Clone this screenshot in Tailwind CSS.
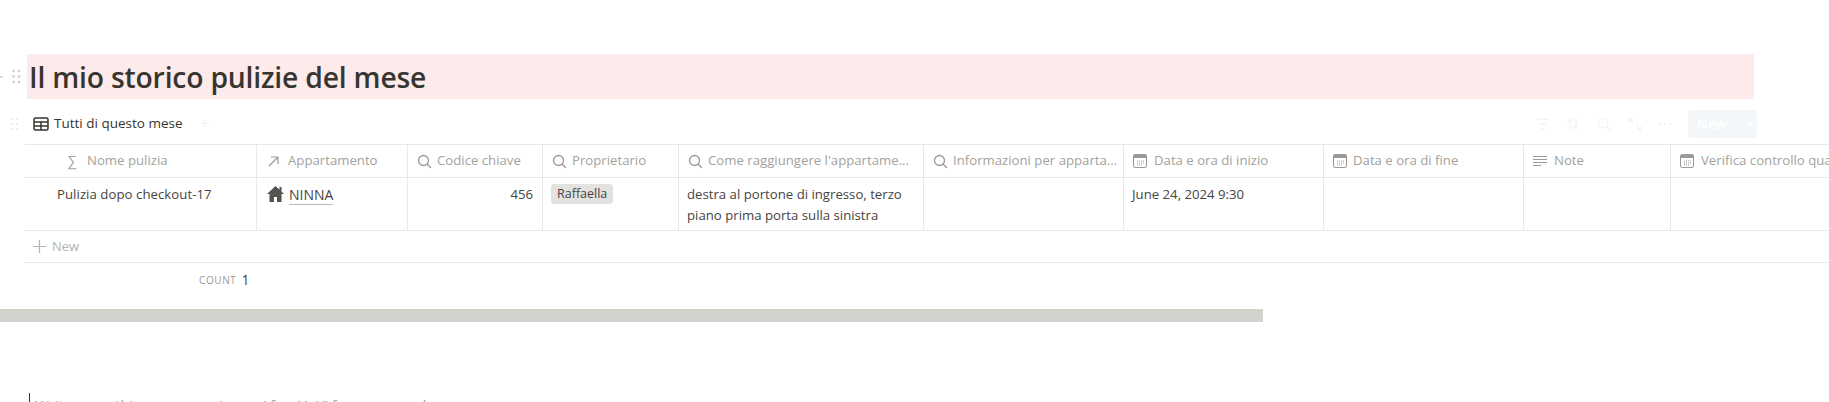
<!DOCTYPE html>
<html lang="it"><head><meta charset="utf-8"><script src="https://cdn.jsdelivr.net/npm/@tailwindcss/browser@4"></script><title>Storico</title></head>
<body class="bg-white overflow-hidden">
<div class="w-[1829px] h-[402px] overflow-hidden pt-[54px] font-['Open_Sans','Noto_Sans',sans-serif] text-[#46443f] relative">
  <!-- title -->
  <div class="flex items-center h-[45px]">
    <div class="w-[27px] flex items-center justify-between pr-[6px]">
      <span class="w-[3px] h-[2px] bg-[#dededb]"></span>
      <svg width="9" height="15" viewBox="0 0 9 15" fill="#c9c8c4"><circle cx="1.500" cy="2" r="1.200"/><circle cx="7" cy="2" r="1.200"/><circle cx="1.500" cy="7.500" r="1.200"/><circle cx="7" cy="7.500" r="1.200"/><circle cx="1.500" cy="13" r="1.200"/><circle cx="7" cy="13" r="1.200"/></svg>
    </div>
    <div class="w-[1727px] h-[45px] bg-[#fdebec] flex items-center pl-[2px] pt-[2px]">
      <h1 class="text-[28.300px] font-[550] leading-none tracking-[-0.2px] text-[#373530]">Il mio storico pulizie del mese</h1>
    </div>
  </div>
  <!-- toolbar -->
  <div class="flex items-center h-[45px] pt-[4px]">
    <div class="w-[33px] pl-[10px]">
      <svg width="9" height="16" viewBox="0 0 9 16" fill="#eeeeec"><circle cx="1.500" cy="3" r="1.200"/><circle cx="7" cy="3" r="1.200"/><circle cx="1.500" cy="8" r="1.200"/><circle cx="7" cy="8" r="1.200"/><circle cx="1.500" cy="13" r="1.200"/><circle cx="7" cy="13" r="1.200"/></svg>
    </div>
    <svg width="16" height="14" viewBox="0 0 16 14" fill="none" stroke="#373530" stroke-width="1.500"><rect x="1" y="1" width="14" height="12" rx="1.500"/><path d="M1 5h14M1 9h14M8 5v8"/></svg>
    <span class="ml-[5px] mt-[1px] text-[13.500px] font-medium leading-none text-[#373530]">Tutti di questo mese</span>
    <span class="ml-[18px] text-[#f0f0ee] text-[14px] leading-none">+</span>
    <div class="ml-auto mr-[72px] flex items-center">
      <svg width="14" height="12" viewBox="0 0 14 12" stroke="#f1f2f2" stroke-width="1.600" fill="none" class="mr-[16px]"><path d="M1 1.500h12M3.500 6h7M5.500 10.500h3"/></svg>
      <svg width="14" height="14" viewBox="0 0 14 14" stroke="#f1f2f2" stroke-width="1.300" fill="none" class="mr-[17px]"><path d="M4 12V2M1.500 4.500 4 2l2.500 2.500M10 2v10M7.500 9.500 10 12l2.500-2.500"/></svg>
      <svg width="14" height="14" viewBox="0 0 14 14" stroke="#f1f2f2" stroke-width="1.300" fill="none" class="mr-[17px]"><circle cx="6" cy="6" r="4.700"/><path d="m9.500 9.500 3.500 3.500"/></svg>
      <svg width="14" height="14" viewBox="0 0 14 14" stroke="#f1f2f2" stroke-width="1.300" fill="none" class="mr-[16px]"><path d="M1.500 1.500 6 6M1.500 5V1.500H5M12.500 12.500 8 8M12.500 9v3.500H9"/></svg>
      <svg width="14" height="4" viewBox="0 0 14 4" fill="#f1f2f2" class="mr-[16px]"><circle cx="2" cy="2" r="1.200"/><circle cx="7" cy="2" r="1.200"/><circle cx="12" cy="2" r="1.200"/></svg>
      <div class="w-[69px] h-[28px] rounded-[4px] bg-[#f4f7fa] flex items-center pl-[9px] text-white text-[14px] font-semibold leading-none">New
        <svg width="9" height="6" viewBox="0 0 9 6" fill="none" stroke="#ffffff" stroke-width="1.300" class="ml-[18px]"><path d="m1 1 3.500 3.500L8 1"/></svg>
      </div>
    </div>
  </div>
  <!-- table -->
  <div class="ml-[25px] w-[1804px] text-[13.200px] leading-none">
    <div class="flex h-[34px] border-y border-[#e9e9e7] text-[#a3a29e] w-[2000px]">
      <div class="w-[232px] shrink-0 border-r border-[#e9e9e7] flex items-center pl-[43px] gap-[8px]"><span class="w-[11px] text-[#a5a4a0] text-[14px]">∑</span><span>Nome pulizia</span></div>
      <div class="w-[151px] shrink-0 border-r border-[#e9e9e7] flex items-center pl-[11px] gap-[9px]"><svg width="11" height="11" viewBox="0 0 11 11" fill="none" stroke="#9b9a97" stroke-width="1.200"><path d="M1 10 10 1M3 1h7v7"/></svg><span>Appartamento</span></div>
      <div class="w-[135px] shrink-0 border-r border-[#e9e9e7] flex items-center pl-[9px] gap-[5px]"><svg width="15" height="15" viewBox="0 0 15 15" fill="none" stroke="#9b9a97" stroke-width="1.300"><circle cx="6.500" cy="6.500" r="5"/><path d="m10 10 4 4"/></svg><span>Codice chiave</span></div>
      <div class="w-[136px] shrink-0 border-r border-[#e9e9e7] flex items-center pl-[9px] gap-[5px]"><svg width="15" height="15" viewBox="0 0 15 15" fill="none" stroke="#9b9a97" stroke-width="1.300"><circle cx="6.500" cy="6.500" r="5"/><path d="m10 10 4 4"/></svg><span>Proprietario</span></div>
      <div class="w-[245px] shrink-0 border-r border-[#e9e9e7] flex items-center pl-[9px] gap-[5px]"><svg width="15" height="15" viewBox="0 0 15 15" fill="none" stroke="#9b9a97" stroke-width="1.300"><circle cx="6.500" cy="6.500" r="5"/><path d="m10 10 4 4"/></svg><span class="whitespace-nowrap">Come raggiungere l'appartame...</span></div>
      <div class="w-[200px] shrink-0 border-r border-[#e9e9e7] flex items-center pl-[9px] gap-[5px]"><svg width="15" height="15" viewBox="0 0 15 15" fill="none" stroke="#9b9a97" stroke-width="1.300"><circle cx="6.500" cy="6.500" r="5"/><path d="m10 10 4 4"/></svg><span class="whitespace-nowrap">Informazioni per apparta...</span></div>
      <div class="w-[200px] shrink-0 border-r border-[#e9e9e7] flex items-center pl-[9px] gap-[7px]"><svg width="14" height="14" viewBox="0 0 14 14" fill="none" stroke="#9b9a97"><rect x=".5" y=".5" width="13" height="13" rx="1.500"/><path d="M1 2.500h12" stroke-width="3"/><path d="M4 7h7M4 9h7M4 11h5" stroke-dasharray="1 1"/></svg><span>Data e ora di inizio</span></div>
      <div class="w-[200px] shrink-0 border-r border-[#e9e9e7] flex items-center pl-[9px] gap-[6px]"><svg width="14" height="14" viewBox="0 0 14 14" fill="none" stroke="#9b9a97"><rect x=".5" y=".5" width="13" height="13" rx="1.500"/><path d="M1 2.500h12" stroke-width="3"/><path d="M4 7h7M4 9h7M4 11h5" stroke-dasharray="1 1"/></svg><span>Data e ora di fine</span></div>
      <div class="w-[147px] shrink-0 border-r border-[#e9e9e7] flex items-center pl-[9px] gap-[7px]"><svg width="14" height="13" viewBox="0 0 14 13" fill="none" stroke="#9b9a97" stroke-width="1.100"><path d="M0 1.500h14M0 4.500h14M0 7.500h14M0 10.500h8"/></svg><span>Note</span></div>
      <div class="w-[300px] shrink-0 flex items-center pl-[9px] gap-[7px]"><svg width="14" height="14" viewBox="0 0 14 14" fill="none" stroke="#9b9a97"><rect x=".5" y=".5" width="13" height="13" rx="1.500"/><path d="M1 2.500h12" stroke-width="3"/><path d="M4 7h7M4 9h7M4 11h5" stroke-dasharray="1 1"/></svg><span class="whitespace-nowrap">Verifica controllo qualità</span></div>
    </div>
    <div class="flex h-[53px] border-b border-[#e9e9e7] w-[2000px] text-[13.200px]">
      <div class="w-[232px] shrink-0 border-r border-[#e9e9e7] pl-[32px] pt-[7px] leading-[18px] tracking-[0.05px]">Pulizia dopo checkout-17</div>
      <div class="w-[151px] shrink-0 border-r border-[#e9e9e7] pl-[10px] pt-[7px] flex items-start gap-[5px]">
        <svg width="17" height="16" viewBox="0 0 17 16" fill="#55534e" class="mt-[1px]"><path d="M8.500 0 0 8h2.500v8h4.500v-5h3v5h4.500V8H17l-2.500-2.400V1h-2v2.700z"/></svg>
        <span class="text-[14px] leading-[19px] font-medium border-b border-[#b9b8b4] h-[20px]">NINNA</span>
      </div>
      <div class="w-[135px] shrink-0 border-r border-[#e9e9e7] pr-[9px] pt-[7px] text-right leading-[18px]">456</div>
      <div class="w-[136px] shrink-0 border-r border-[#e9e9e7] pl-[8px] pt-[6px]"><span class="inline-block h-[20px] px-[6px] rounded-[3px] bg-[#e3e2e0] leading-[20px] text-[12.500px]">Raffaella</span></div>
      <div class="w-[245px] shrink-0 border-r border-[#e9e9e7] pl-[8px] pr-[8px] pt-[6px] leading-[21px]">destra al portone di ingresso, terzo piano prima porta sulla sinistra</div>
      <div class="w-[200px] shrink-0 border-r border-[#e9e9e7]"></div>
      <div class="w-[200px] shrink-0 border-r border-[#e9e9e7] pl-[8px] pt-[7px] leading-[18px]">June 24, 2024 9:30</div>
      <div class="w-[200px] shrink-0 border-r border-[#e9e9e7]"></div>
      <div class="w-[147px] shrink-0 border-r border-[#e9e9e7]"></div>
      <div class="w-[300px] shrink-0"></div>
    </div>
    <div class="flex items-center h-[32px] border-b border-[#e9e9e7] pl-[8px] gap-[6px] text-[#b4b3af] text-[13px] w-[2000px]">
      <svg width="13" height="13" viewBox="0 0 13 13" stroke="#b4b3af" stroke-width="1.200"><path d="M6.500 0v13M0 6.500h13"/></svg><span>New</span>
    </div>
    <div class="flex items-center h-[33px] pl-[174px]">
      <span class="text-[10px] tracking-[0.6px] text-[#9b9a97] font-medium">COUNT</span><span class="ml-[5px] text-[14px]">1</span>
    </div>
  </div>
  <!-- horizontal scrollbar -->
  <div class="mt-[13px] w-[1263px] h-[13px] bg-[#d3d2cc]"></div>
  <!-- editor placeholder -->
  <div class="relative mt-[71px] ml-[29px] h-[20px] border-l border-[#373530] pl-[5px] text-[15px] text-[#a5a4a0] leading-[25px] whitespace-nowrap">Write something, or press 'space' for AI, '/' for commands</div>
</div>
</body></html>
